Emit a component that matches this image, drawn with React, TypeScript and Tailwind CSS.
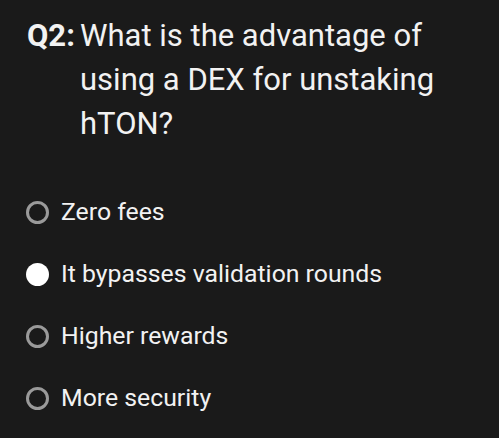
import React from "react";

const options = [
  { label: "Zero fees", selected: false },
  { label: "It bypasses validation rounds", selected: true },
  { label: "Higher rewards", selected: false },
  { label: "More security", selected: false },
];

export default function App() {
  return (
    <div
      className="w-[499px] h-[438px] bg-[#1a1a1a] text-[#f2f2f2] overflow-hidden"
      style={{ fontFamily: "Roboto, 'Noto Sans', sans-serif" }}
    >
      <div className="flex pl-[27px] pt-[14px] text-[31px] leading-[44px]">
        <span className="font-bold w-[53px] shrink-0">Q2:</span>
        <span className="w-[380px]">What is the advantage of using a DEX for unstaking hTON?</span>
      </div>
      <div className="mt-[35px] flex flex-col">
        {options.map((o) => (
          <div key={o.label} className="flex items-center h-[62px] pl-[26px]">
            {o.selected ? (
              <span className="w-[23px] h-[23px] rounded-full bg-white shrink-0" />
            ) : (
              <span className="w-[23px] h-[23px] rounded-full border-[3px] border-[#9a9a9a] shrink-0" />
            )}
            <span className="ml-[12px] text-[24.8px]">{o.label}</span>
          </div>
        ))}
      </div>
    </div>
  );
}
